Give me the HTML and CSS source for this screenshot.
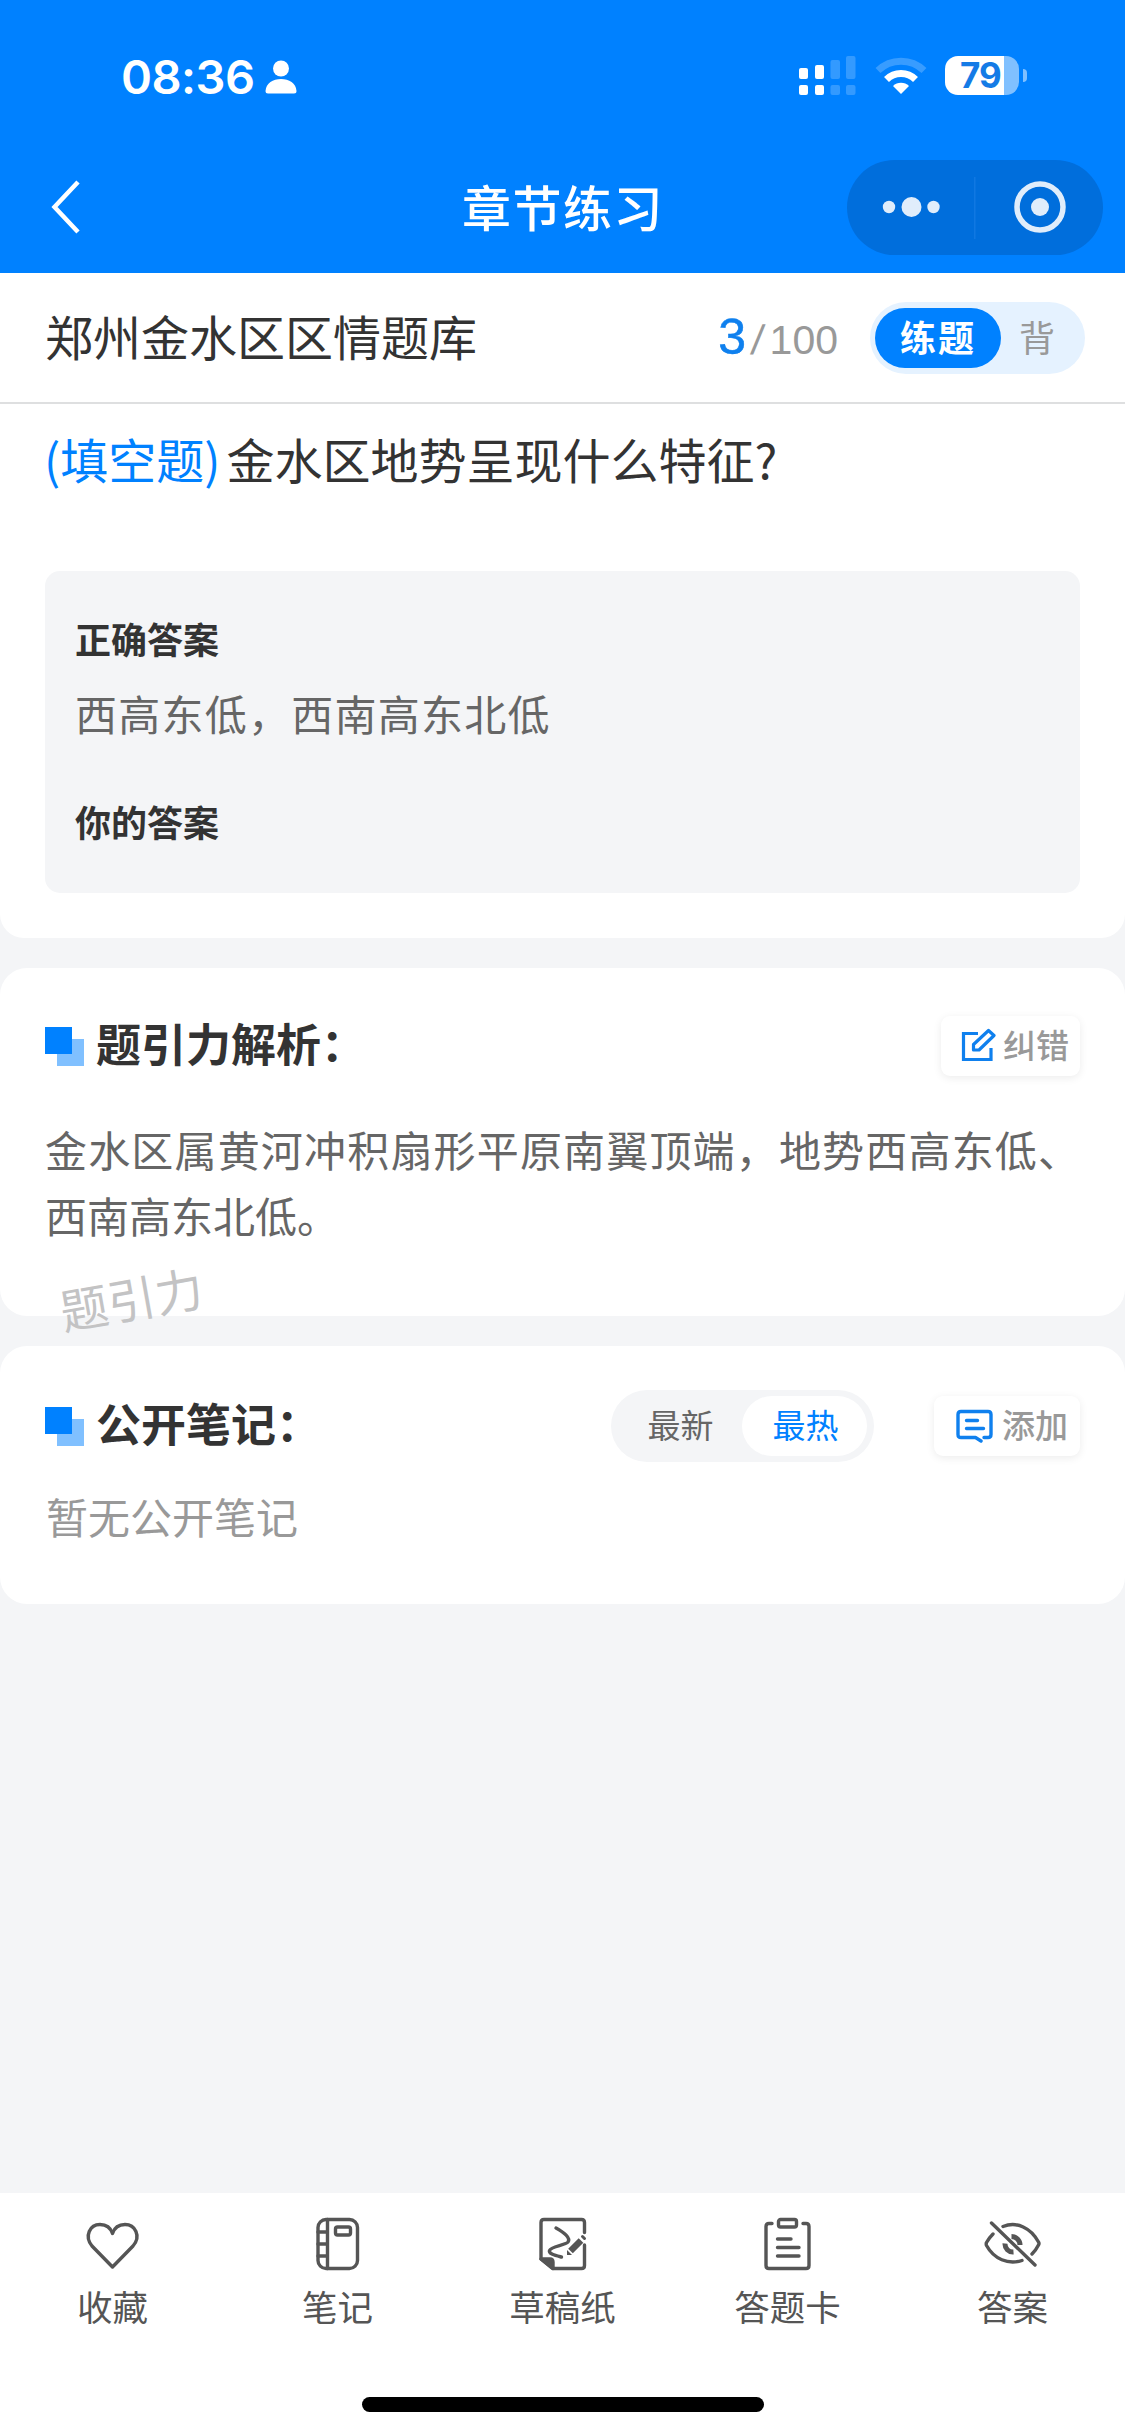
FILE: index.html
```html
<!DOCTYPE html>
<html lang="zh-CN">
<head>
<meta charset="utf-8">
<title>章节练习</title>
<link rel="stylesheet" href="styles.css">
</head>
<body>
<div class="app">
  <header class="header">
    <div class="status">
      <span class="time">08:36</span>
      <svg class="person" width="32" height="34" viewBox="0 0 32 34" fill="#fff"><circle cx="16" cy="8.500" r="8"/><path d="M.5 31C1 23 8 19 16 19s15 4 15.500 12q0 2.500-2.500 2.500H3Q.5 33.500.5 31z"/></svg>
      <svg class="signal" width="58" height="40" viewBox="0 0 58 40" fill="#fff"><rect x="0" y="12" width="9" height="11" rx="2"/><rect x="0" y="29" width="9" height="10" rx="2"/><rect x="16" y="9" width="9" height="14" rx="2"/><rect x="16" y="29" width="9" height="10" rx="2"/><g opacity=".2"><rect x="31.500" y="4" width="9.500" height="19" rx="2"/><rect x="31.500" y="29" width="9.500" height="10" rx="2"/><rect x="47" y="0" width="9.500" height="23" rx="2"/><rect x="47" y="29" width="9.500" height="10" rx="2"/></g></svg>
      <svg class="wifi" width="52" height="38" viewBox="0 0 52 38" fill="none" stroke="#fff"><path d="M3 13.500A33 33 0 0 1 49 13.500" stroke-width="7" opacity=".22"/><path d="M11.500 22.500A20.500 20.500 0 0 1 40.500 22.500" stroke-width="7"/><path d="M26 37l-8-8a11.500 11.500 0 0 1 16 0z" fill="#fff" stroke="none"/></svg>
      <div class="battery">79</div>
      <i class="nub"></i>
    </div>
    <div class="navbar">
      <svg class="back" width="30" height="54" viewBox="0 0 30 54" fill="none" stroke="#fff" stroke-width="4.500"><path d="M28 2L4.500 27 28 52"/></svg>
      <h1 class="title">章节练习</h1>
      <svg class="capsule" width="256" height="95" viewBox="0 0 256 95" fill="#e0edfb"><rect width="256" height="95" rx="47.500" fill="#006edc"/><circle cx="42" cy="47" r="6.200"/><circle cx="64.500" cy="47" r="10"/><circle cx="86.500" cy="47" r="6.200"/><path d="M127 17h1.500v62H127z" fill="#1078e2"/><circle cx="193" cy="47" r="23" fill="none" stroke="#e0edfb" stroke-width="5.500"/><circle cx="193" cy="47" r="9"/></svg>
    </div>
  </header>

  <section class="bank">
    <span class="bank-name">郑州金水区区情题库</span>
    <div class="progress"><span class="current">3</span><span class="slash">/</span><span class="total">100</span></div>
    <div class="mode"><span class="mode-on">练题</span><span class="mode-off">背</span></div>
  </section>

  <section class="question">
    <p class="stem"><span class="kind">(填空题)</span>金水区地势呈现什么特征?</p>
    <div class="answers">
      <h3 class="label">正确答案</h3>
      <p class="answer">西高东低，西南高东北低</p>
      <h3 class="label">你的答案</h3>
    </div>
  </section>

  <section class="card analysis">
    <div class="card-head">
      <i class="mark"></i><h2 class="card-title">题引力解析：</h2>
      <button class="action fix"><svg width="35" height="35" viewBox="0 0 35 35" fill="none" stroke="#0f80ee" stroke-width="3.200"><path d="M17 5.500H2.500v26H30V20"/><path d="M12.500 22v-5.500L27.500 2.500l5.500 5L18 22z" stroke-linejoin="round"/></svg>纠错</button>
    </div>
    <p class="text">金水区属黄河冲积扇形平原南翼顶端，地势西高东低、西南高东北低。</p>
    <span class="watermark">题引力</span>
  </section>

  <section class="card notes">
    <div class="card-head">
      <i class="mark"></i><h2 class="card-title">公开笔记：</h2>
      <div class="sort"><span class="sort-item">最新</span><span class="sort-item sort-on">最热</span></div>
      <button class="action add"><svg width="37" height="35" viewBox="0 0 37 35" fill="none" stroke="#0f80ee" stroke-width="3.400" stroke-linecap="round"><path d="M25 33L19.500 29.500H5q-3 0-3-3V6.500q0-3 3-3h27q3 0 3 3v20q0 3-3 3h-4" stroke-linejoin="round"/><path d="M10.500 12.500h11M10.500 20.500h17"/></svg>添加</button>
    </div>
    <p class="empty">暂无公开笔记</p>
  </section>

  <footer class="footer">
    <nav class="tabs">
      <a class="tab"><svg class="icon" viewBox="0 0 60 60"><path d="M29.500 53L9 32C1 22 7 10.500 17 10.500c6 0 10.500 3 12.500 9 2-6 6.500-9 12.500-9 10 0 16.500 11.500 8 21.500z"/></svg>收藏</a>
      <a class="tab"><svg class="icon" viewBox="0 0 60 60"><rect x="10" y="5.500" width="39.500" height="49" rx="8"/><path d="M19.500 5.500v49M10 18h9.500M10 30h9.500M10 42h9.500"/><rect x="27.500" y="13" width="15" height="8" rx="2"/></svg>笔记</a>
      <a class="tab"><svg class="icon" viewBox="0 0 60 60"><path d="M51.500 18.500V8.500q0-3-3-3H11q-3 0-3 3V45l11.500 9.500h29q3 0 3-3V31"/><path d="M8 45h9q3 0 3 3v6.500z" fill="#555"/><path d="M23 14c8 4.500 15 10 12 14-3 3.500-17 4-18.500 8.500-1 3.500 6 5 12 6.500"/><path d="M37.500 37L48 26.500" stroke-width="6.500" stroke-linecap="butt"/><path d="M49.500 22.500l2 2" stroke-width="3"/><path d="M34 36v5h5z" fill="#555" stroke="none"/></svg>草稿纸</a>
      <a class="tab"><svg class="icon" viewBox="0 0 60 60"><path d="M14 9.500h-3q-3 0-3 3v39q0 3 3 3h37q3 0 3-3v-39q0-3-3-3h-3"/><rect x="20.500" y="5.500" width="18" height="7.500" rx="2"/><path d="M19.500 25H33M19.500 33.500H41M19.500 42H41"/></svg>答题卡</a>
      <a class="tab"><svg class="icon" viewBox="0 0 60 60"><path d="M8.500 9L52 51"/><path d="M20 12.500C34 7 48 14 55.500 28q1 1.500 0 3-2.500 5-6.500 9M10 20Q6 24 3.500 28.500q-.6 1.500 0 3C11 45 25 51 39 46.500"/><path d="M22 29.500a8 8 0 0 0 8.500 8.500M28.500 22.500a8.500 8.500 0 0 1 8.500 8.500" stroke-width="5" stroke-linecap="butt"/></svg>答案</a>
    </nav>
    <div class="home-bar"></div>
  </footer>
</div>
</body>
</html>
```
FILE: styles.css
```css
* { box-sizing: border-box; margin: 0; padding: 0; }
body { background: #f4f5f7; font-family: "Noto Sans CJK SC", sans-serif; color: #333; }
svg { display: block; flex: none; }
.app { width: 1125px; height: 2436px; display: flex; flex-direction: column; overflow: hidden; }

.header { height: 273px; flex: none; background: #0081ff; color: #fff; }
.status { height: 151px; display: flex; align-items: center; padding: 0 98px 0 121px; }
.time { font: 600 47px/56px Inter, sans-serif; letter-spacing: -.5px; width: 144px; white-space: nowrap; padding-top: 2px; }
.person { margin-top: 2px; }
.signal { margin-left: auto; margin-right: 18px; }
.wifi { margin-right: 18px; }
.battery { width: 74px; height: 39px; border-radius: 13px; background: linear-gradient(to right, #fff 59px, rgba(255,255,255,.5) 59px); color: #147be6; font: 700 35px/39px Inter, sans-serif; padding-left: 15px; letter-spacing: -1px; }
.nub { width: 4px; height: 13px; margin-left: 4px; border-radius: 0 4px 4px 0; background: rgba(255,255,255,.5); }
.navbar { height: 112px; display: grid; grid-template-columns: 1fr auto 1fr; align-items: center; padding: 0 22px 0 50px; }
.title { font-size: 49px; font-weight: 500; line-height: 70px; letter-spacing: 1.500px; margin: 0 0 3px -27px; }
.capsule { justify-self: end; }

.bank { height: 131px; flex: none; background: #fff; border-bottom: 2px solid #dedfe0; display: flex; align-items: center; padding: 0 40px 0 45px; }
.bank-name { font-size: 48px; line-height: 70px; margin-top: -5px; }
.progress { margin-left: auto; margin-right: 32px; margin-top: 2px; display: flex; align-items: baseline; color: #999; font-family: "Liberation Sans", sans-serif; font-size: 41px; line-height: 60px; }
.current { font-size: 50px; color: #0f80ee; -webkit-text-stroke: .5px; }
.slash { margin: 0 6px; transform: skewX(-8deg); }
.mode { display: flex; width: 215px; height: 72px; padding: 6px 5px; border-radius: 36px; background: #e5f2ff; font-size: 36px; line-height: 56px; margin-top: 1px; }
.mode-on { width: 126px; height: 60px; border-radius: 30px; background: #0081ff; color: #fff; font-weight: 700; letter-spacing: 2px; text-align: center; }
.mode-off { margin-left: 18px; color: #999; }

.question { flex: none; height: 534px; background: #fff; border-radius: 0 0 24px 24px; padding: 18px 45px 0 44px; }
.stem { font-size: 48px; line-height: 72px; }
.kind { color: #0081ff; margin-right: 6px; }
.answers { margin: 77px 0 0 1px; height: 322px; border-radius: 15px; background: #f4f5f7; padding: 42px 30px 0; }
.label { font-size: 36px; line-height: 50px; font-weight: 700; }
.answer { font-size: 42px; line-height: 60px; letter-spacing: 1.250px; color: #666; margin: 20px 0 53px; }

.card { position: relative; flex: none; background: #fff; border-radius: 27px; padding: 0 45px; }
.analysis { margin-top: 30px; height: 348px; padding-top: 48px; }
.notes { margin-top: 30px; height: 258px; padding-top: 50px; }
.card-head { display: flex; align-items: center; height: 60px; }
.mark { width: 39px; height: 39px; background: linear-gradient(#0081ff, #0081ff) 0 0/27px 27px no-repeat, linear-gradient(#80c0ff, #80c0ff) 12px 12px/27px 27px no-repeat; }
.card-title { font-size: 45px; line-height: 60px; font-weight: 700; margin: 0 auto 6px 12px; white-space: nowrap; }
.action { display: flex; align-items: center; height: 60px; border: 0; border-radius: 9px; background: #fff; box-shadow: 0 2px 8px rgba(0,0,0,.08); color: #999; font: 500 33px/56px "Noto Sans CJK SC", sans-serif; white-space: nowrap; padding-bottom: 5px; }
.action svg { margin-top: 3px; }
.fix { width: 139px; padding-left: 20px; gap: 7px; }
.add { width: 146px; padding-left: 22px; gap: 9px; }
.sort { display: flex; width: 263px; height: 72px; padding: 6px; border-radius: 36px; background: #f4f5f7; margin-right: 60px; }
.sort-item { width: 125px; height: 60px; border-radius: 30px; font-size: 33px; line-height: 57px; text-align: center; color: #666; padding-left: 2px; }
.sort-on { background: #fff; color: #0081ff; }
.text { margin-top: 40px; font-size: 42px; line-height: 66px; color: #666; text-align: justify; }
.watermark { position: absolute; left: 59px; top: 296px; font-size: 48px; line-height: 66px; color: #c3c3c4; transform: rotate(-10deg); z-index: 1; }
.empty { margin-top: 30px; padding-left: 1px; font-size: 42px; line-height: 60px; color: #999; }

.footer { margin-top: auto; height: 243px; flex: none; background: #fff; padding-top: 21px; }
.tabs { display: flex; }
.tab { flex: 1; display: flex; flex-direction: column; align-items: center; gap: 10px; font-size: 35.500px; line-height: 44px; color: #555; }
.icon { width: 60px; height: 60px; fill: none; stroke: #555; stroke-width: 3.400; stroke-linecap: round; stroke-linejoin: round; }
.home-bar { width: 402px; height: 15px; border-radius: 8px; background: #000; margin: 69px auto 0; }
```
